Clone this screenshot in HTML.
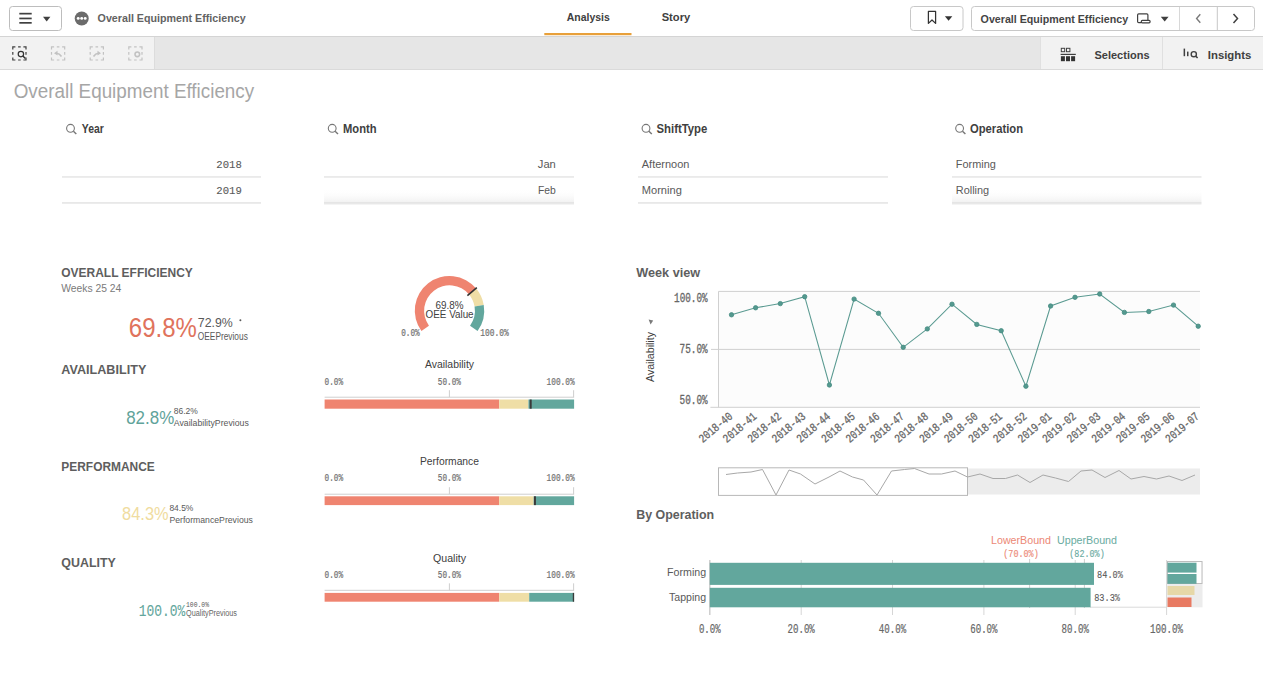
<!DOCTYPE html>
<html><head><meta charset="utf-8"><title>Overall Equipment Efficiency</title>
<style>
html,body{margin:0;padding:0;background:#fff;width:1263px;height:697px;overflow:hidden;}
svg{display:block;font-family:"Liberation Sans", sans-serif;}
</style></head><body>
<svg width="1263" height="697" viewBox="0 0 1263 697">
<defs><linearGradient id="sh" x1="0" y1="0" x2="0" y2="1"><stop offset="0" stop-color="#fff" stop-opacity="0"/><stop offset="1" stop-color="#f1f1f1"/></linearGradient></defs>
<rect x="0" y="0" width="1263" height="36" fill="#ffffff"/>
<rect x="0" y="36" width="1263" height="1" fill="#d4d4d4"/>
<rect x="9.5" y="6.5" width="52" height="24" rx="3" fill="#fff" stroke="#bdbdbd" stroke-width="1"/>
<rect x="19.3" y="12.8" width="12.4" height="1.7" fill="#404040"/>
<rect x="19.3" y="17.6" width="12.4" height="1.7" fill="#404040"/>
<rect x="19.3" y="22.0" width="12.4" height="1.7" fill="#404040"/>
<path d="M43 16.8 L50.4 16.8 L46.7 21.4 Z" fill="#404040"/>
<circle cx="81.7" cy="18.5" r="7" fill="#6b6b6b"/>
<circle cx="78.2" cy="18.4" r="1.45" fill="#fff"/>
<circle cx="81.7" cy="18.4" r="1.45" fill="#fff"/>
<circle cx="85.2" cy="18.4" r="1.45" fill="#fff"/>
<text x="97.60" y="21.60" font-size="11.3" fill="#636363" font-weight="bold" textLength="148.00" lengthAdjust="spacingAndGlyphs" >Overall Equipment Efficiency</text>
<text x="566.80" y="21.10" font-size="11.6" fill="#404040" font-weight="bold" textLength="43.00" lengthAdjust="spacingAndGlyphs" >Analysis</text>
<text x="661.70" y="21.10" font-size="11.6" fill="#404040" font-weight="bold" textLength="28.50" lengthAdjust="spacingAndGlyphs" >Story</text>
<rect x="544.3" y="33" width="87.2" height="2.2" fill="#e8a03a"/>
<rect x="910.5" y="6.5" width="52.5" height="24" rx="3" fill="#fff" stroke="#c8c8c8"/>
<path d="M928.4 11.4 h7.2 v12 l-3.6 -3.4 l-3.6 3.4 z" fill="none" stroke="#333" stroke-width="1.25" stroke-linejoin="round"/>
<path d="M944.9 16.2 L952.3 16.2 L948.6 20.8 Z" fill="#333"/>
<rect x="971.5" y="6.5" width="283" height="24" rx="3" fill="#fff" stroke="#c8c8c8"/>
<rect x="1179" y="7" width="1" height="23" fill="#d8d8d8"/>
<rect x="1216.8" y="7" width="1" height="23" fill="#c8c8c8"/>
<text x="980.60" y="22.60" font-size="11.4" fill="#454545" font-weight="bold" textLength="147.50" lengthAdjust="spacingAndGlyphs" >Overall Equipment Efficiency</text>
<path d="M1141.3 22.7 H1138.7 a1.1 1.1 0 0 1 -1.1 -1.1 V15 a1.1 1.1 0 0 1 1.1 -1.1 H1146.8 a1.1 1.1 0 0 1 1.1 1.1 V20.5" fill="none" stroke="#404040" stroke-width="1.2"/><rect x="1141.3" y="20.4" width="8.8" height="2.4" rx="1" fill="none" stroke="#404040" stroke-width="1.2"/>
<path d="M1160.8 16.8 L1168.6 16.8 L1164.7 21.4 Z" fill="#404040"/>
<path d="M1200.3 14.3 L1196.6 18.5 L1200.3 22.7" fill="none" stroke="#7a7a7a" stroke-width="1.4"/>
<path d="M1233.5 14 L1237.5 18.5 L1233.5 23" fill="none" stroke="#404040" stroke-width="1.5"/>
<rect x="0" y="37" width="1263" height="32" fill="#e6e6e6"/>
<rect x="0" y="37" width="154" height="32" fill="#f2f2f2"/>
<rect x="154" y="37" width="1" height="32" fill="#dcdcdc"/>
<rect x="1040" y="37" width="223" height="32" fill="#f2f2f2"/>
<rect x="1040" y="37" width="1" height="32" fill="#e0e0e0"/>
<rect x="1162" y="37" width="1" height="32" fill="#e0e0e0"/>
<rect x="0" y="69" width="1263" height="1" fill="#dadada"/>
<path d="M12.8 49.4 V46.8 H15.4 M23.4 46.8 H26.0 V49.4 M26.0 57.4 V60.0 H23.4 M15.4 60.0 H12.8 V57.4 M18.099999999999998 46.8 H20.7 M18.099999999999998 60.0 H20.7 M12.8 52.1 V54.699999999999996 M26.0 52.1 V54.699999999999996" fill="none" stroke="#404040" stroke-width="1.2"/>
<circle cx="20.9" cy="54.1" r="2.7" fill="none" stroke="#333" stroke-width="1.2"/><path d="M22.9 56.1 L25.4 58.6" stroke="#333" stroke-width="1.4"/>
<path d="M51.5 49.4 V46.8 H54.1 M62.1 46.8 H64.7 V49.4 M64.7 57.4 V60.0 H62.1 M54.1 60.0 H51.5 V57.4 M56.800000000000004 46.8 H59.4 M56.800000000000004 60.0 H59.4 M51.5 52.1 V54.699999999999996 M64.7 52.1 V54.699999999999996" fill="none" stroke="#c2c2c2" stroke-width="1.2"/>
<path d="M61.5 56.5 Q59.5 53.5 56.5 53.2" fill="none" stroke="#c2c2c2" stroke-width="1.6"/><path d="M54 53.2 L57.5 50.8 L57.5 55.6 Z" fill="#c2c2c2"/>
<path d="M90.2 49.4 V46.8 H92.8 M100.80000000000001 46.8 H103.4 V49.4 M103.4 57.4 V60.0 H100.80000000000001 M92.8 60.0 H90.2 V57.4 M95.5 46.8 H98.1 M95.5 60.0 H98.1 M90.2 52.1 V54.699999999999996 M103.4 52.1 V54.699999999999996" fill="none" stroke="#c2c2c2" stroke-width="1.2"/>
<path d="M93.5 56.5 Q95.5 53.5 98.5 53.2" fill="none" stroke="#c2c2c2" stroke-width="1.6"/><path d="M101 53.2 L97.5 50.8 L97.5 55.6 Z" fill="#c2c2c2"/>
<path d="M128.8 49.4 V46.8 H131.4 M139.4 46.8 H142.0 V49.4 M142.0 57.4 V60.0 H139.4 M131.4 60.0 H128.8 V57.4 M134.1 46.8 H136.70000000000002 M134.1 60.0 H136.70000000000002 M128.8 52.1 V54.699999999999996 M142.0 52.1 V54.699999999999996" fill="none" stroke="#c2c2c2" stroke-width="1.2"/>
<circle cx="137.3" cy="54.3" r="2.3" fill="none" stroke="#c2c2c2" stroke-width="1.6"/>
<rect x="1061.3" y="48.3" width="3.4" height="3.4" fill="none" stroke="#404040" stroke-width="1"/>
<rect x="1066.5" y="48.3" width="3.4" height="3.4" fill="none" stroke="#404040" stroke-width="1"/>
<rect x="1060.6" y="53.8" width="15.2" height="1.2" fill="#404040"/>
<rect x="1060.9" y="56.2" width="4" height="5" fill="#333"/>
<rect x="1066.0" y="56.2" width="4" height="5" fill="#333"/>
<rect x="1071.1" y="56.2" width="4" height="5" fill="#333"/>
<text x="1094.50" y="59.00" font-size="11.2" fill="#404040" font-weight="bold" textLength="55.00" lengthAdjust="spacingAndGlyphs" >Selections</text>
<rect x="1183.6" y="48.6" width="1.5" height="7.6" fill="#404040"/><rect x="1187" y="51.6" width="1.5" height="4.6" fill="#404040"/>
<circle cx="1193.8" cy="54.2" r="2.6" fill="none" stroke="#404040" stroke-width="1.4"/><path d="M1195.7 56.1 L1197.6 58" stroke="#404040" stroke-width="1.5"/>
<text x="1207.80" y="58.80" font-size="11.2" fill="#404040" font-weight="bold" textLength="43.50" lengthAdjust="spacingAndGlyphs" >Insights</text>
<text x="13.70" y="97.70" font-size="20.1" fill="#a6a6a6" textLength="240.50" lengthAdjust="spacingAndGlyphs" >Overall Equipment Efficiency</text>
<circle cx="70.5" cy="128.3" r="3.9" fill="none" stroke="#777" stroke-width="1.1"/><path d="M73.4 131.2 L76.3 134.1" stroke="#777" stroke-width="1.4"/>
<text x="81.80" y="133.20" font-size="12" fill="#404040" font-weight="bold" textLength="22.00" lengthAdjust="spacingAndGlyphs" >Year</text>
<rect x="62" y="176.4" width="199" height="1.1" fill="#dcdcdc"/>
<rect x="62" y="202.4" width="199" height="1.1" fill="#d9d9d9" />
<text x="241.80" y="167.60" font-size="11.6" fill="#595959" text-anchor="end" font-family='"Liberation Mono", monospace' stroke="#595959" stroke-width="0.1" textLength="25.50" lengthAdjust="spacingAndGlyphs" >2018</text>
<text x="241.80" y="193.60" font-size="11.6" fill="#595959" text-anchor="end" font-family='"Liberation Mono", monospace' stroke="#595959" stroke-width="0.1" textLength="25.50" lengthAdjust="spacingAndGlyphs" >2019</text>
<circle cx="332.2" cy="128.3" r="3.9" fill="none" stroke="#777" stroke-width="1.1"/><path d="M335.1 131.2 L338.0 134.1" stroke="#777" stroke-width="1.4"/>
<text x="343.00" y="133.20" font-size="12" fill="#404040" font-weight="bold" textLength="33.50" lengthAdjust="spacingAndGlyphs" >Month</text>
<rect x="324" y="189" width="250" height="13.5" fill="url(#sh)"/>
<rect x="324" y="203.5" width="250" height="1.2" fill="#efefef"/>
<rect x="324" y="176.4" width="250" height="1.1" fill="#dcdcdc"/>
<rect x="324" y="202.4" width="250" height="1.1" fill="#d9d9d9" />
<text x="555.80" y="167.60" font-size="11.6" fill="#595959" text-anchor="end" textLength="18.00" lengthAdjust="spacingAndGlyphs" >Jan</text>
<text x="555.80" y="193.60" font-size="11.6" fill="#595959" text-anchor="end" textLength="17.80" lengthAdjust="spacingAndGlyphs" >Feb</text>
<circle cx="646.0" cy="128.3" r="3.9" fill="none" stroke="#777" stroke-width="1.1"/><path d="M648.9 131.2 L651.8 134.1" stroke="#777" stroke-width="1.4"/>
<text x="656.50" y="133.20" font-size="12" fill="#404040" font-weight="bold" textLength="50.80" lengthAdjust="spacingAndGlyphs" >ShiftType</text>
<rect x="638" y="176.4" width="250" height="1.1" fill="#dcdcdc"/>
<rect x="638" y="202.4" width="250" height="1.1" fill="#d9d9d9" />
<text x="641.80" y="167.60" font-size="11.6" fill="#595959" textLength="47.60" lengthAdjust="spacingAndGlyphs" >Afternoon</text>
<text x="641.80" y="193.60" font-size="11.6" fill="#595959" textLength="40.00" lengthAdjust="spacingAndGlyphs" >Morning</text>
<circle cx="959.6" cy="128.3" r="3.9" fill="none" stroke="#777" stroke-width="1.1"/><path d="M962.5 131.2 L965.4 134.1" stroke="#777" stroke-width="1.4"/>
<text x="970.00" y="133.20" font-size="12" fill="#404040" font-weight="bold" textLength="53.00" lengthAdjust="spacingAndGlyphs" >Operation</text>
<rect x="952" y="189" width="249.5" height="13.5" fill="url(#sh)"/>
<rect x="952" y="203.5" width="249.5" height="1.2" fill="#efefef"/>
<rect x="952" y="176.4" width="249.5" height="1.1" fill="#dcdcdc"/>
<rect x="952" y="202.4" width="249.5" height="1.1" fill="#d9d9d9" />
<text x="955.80" y="167.60" font-size="11.6" fill="#595959" textLength="40.00" lengthAdjust="spacingAndGlyphs" >Forming</text>
<text x="955.80" y="193.60" font-size="11.6" fill="#595959" textLength="33.30" lengthAdjust="spacingAndGlyphs" >Rolling</text>
<text x="61.30" y="276.70" font-size="13.1" fill="#5e5e5e" font-weight="bold" textLength="131.50" lengthAdjust="spacingAndGlyphs" >OVERALL EFFICIENCY</text>
<text x="61.30" y="291.50" font-size="11" fill="#7a7a7a" textLength="60.00" lengthAdjust="spacingAndGlyphs" >Weeks 25 24</text>
<text x="128.80" y="337.20" font-size="27.6" fill="#e0735c" textLength="68.00" lengthAdjust="spacingAndGlyphs" >69.8%</text>
<text x="197.80" y="326.90" font-size="13.5" fill="#595959" textLength="35.00" lengthAdjust="spacingAndGlyphs" >72.9%</text>
<circle cx="240.4" cy="320.3" r="1" fill="#595959"/>
<text x="197.80" y="340.00" font-size="10" fill="#595959" textLength="50.00" lengthAdjust="spacingAndGlyphs" >OEEPrevious</text>
<text x="61.30" y="373.60" font-size="13.1" fill="#5e5e5e" font-weight="bold" textLength="85.00" lengthAdjust="spacingAndGlyphs" >AVAILABILITY</text>
<text x="126.20" y="423.70" font-size="18.7" fill="#5fa39a" textLength="48.00" lengthAdjust="spacingAndGlyphs" >82.8%</text>
<text x="173.80" y="414.40" font-size="9.3" fill="#595959" textLength="24.00" lengthAdjust="spacingAndGlyphs" >86.2%</text>
<text x="173.80" y="425.80" font-size="9.3" fill="#595959" textLength="75.00" lengthAdjust="spacingAndGlyphs" >AvailabilityPrevious</text>
<text x="61.30" y="470.50" font-size="13.1" fill="#5e5e5e" font-weight="bold" textLength="93.50" lengthAdjust="spacingAndGlyphs" >PERFORMANCE</text>
<text x="122.10" y="520.30" font-size="18.7" fill="#f0dca0" textLength="46.50" lengthAdjust="spacingAndGlyphs" >84.3%</text>
<text x="169.40" y="511.10" font-size="9.3" fill="#595959" textLength="24.00" lengthAdjust="spacingAndGlyphs" >84.5%</text>
<text x="169.40" y="522.60" font-size="9.3" fill="#595959" textLength="83.50" lengthAdjust="spacingAndGlyphs" >PerformancePrevious</text>
<text x="61.30" y="566.60" font-size="13.1" fill="#5e5e5e" font-weight="bold" textLength="54.50" lengthAdjust="spacingAndGlyphs" >QUALITY</text>
<text x="138.80" y="615.60" font-size="17" fill="#62a69c" font-family='"Liberation Mono", monospace' stroke="#62a69c" stroke-width="0.1" textLength="46.50" lengthAdjust="spacingAndGlyphs" >100.0%</text>
<text x="186.00" y="607.20" font-size="7.5" fill="#595959" font-family='"Liberation Mono", monospace' stroke="#595959" stroke-width="0" textLength="23.00" lengthAdjust="spacingAndGlyphs" >100.0%</text>
<text x="186.00" y="616.40" font-size="8.5" fill="#666666" textLength="51.00" lengthAdjust="spacingAndGlyphs" >QualityPrevious</text>
<path d="M421.43 331.10 A34.7 34.7 0 0 1 476.24 288.58 L469.07 294.51 A25.4 25.4 0 0 0 428.95 325.63 Z" fill="#ef8470"/>
<path d="M476.24 288.58 A34.7 34.7 0 0 1 483.74 305.06 L474.56 306.57 A25.4 25.4 0 0 0 469.07 294.51 Z" fill="#efdea6"/>
<path d="M483.74 305.06 A34.7 34.7 0 0 1 477.57 331.10 L470.05 325.63 A25.4 25.4 0 0 0 474.56 306.57 Z" fill="#62a79d"/>
<path d="M467.40 295.63 L476.81 287.70" stroke="#333" stroke-width="1.6"/>
<text x="449.60" y="308.70" font-size="11" fill="#404040" text-anchor="middle" textLength="28.00" lengthAdjust="spacingAndGlyphs" >69.8%</text>
<text x="449.60" y="317.60" font-size="11" fill="#404040" text-anchor="middle" textLength="48.00" lengthAdjust="spacingAndGlyphs" >OEE Value</text>
<text x="401.20" y="336.40" font-size="10.5" fill="#6e6e6e" font-family='"Liberation Mono", monospace' stroke="#6e6e6e" stroke-width="0.2" textLength="18.50" lengthAdjust="spacingAndGlyphs" >0.0%</text>
<text x="480.30" y="336.40" font-size="10.5" fill="#6e6e6e" font-family='"Liberation Mono", monospace' stroke="#6e6e6e" stroke-width="0.2" textLength="28.50" lengthAdjust="spacingAndGlyphs" >100.0%</text>
<text x="449.50" y="367.90" font-size="11" fill="#404040" text-anchor="middle" textLength="49.00" lengthAdjust="spacingAndGlyphs" >Availability</text>
<text x="324.60" y="384.60" font-size="10.5" fill="#6e6e6e" font-family='"Liberation Mono", monospace' stroke="#6e6e6e" stroke-width="0.2" textLength="18.50" lengthAdjust="spacingAndGlyphs" >0.0%</text>
<text x="449.35" y="384.60" font-size="10.5" fill="#6e6e6e" text-anchor="middle" font-family='"Liberation Mono", monospace' stroke="#6e6e6e" stroke-width="0.2" textLength="23.00" lengthAdjust="spacingAndGlyphs" >50.0%</text>
<text x="574.60" y="384.60" font-size="10.5" fill="#6e6e6e" text-anchor="end" font-family='"Liberation Mono", monospace' stroke="#6e6e6e" stroke-width="0.2" textLength="28.00" lengthAdjust="spacingAndGlyphs" >100.0%</text>
<rect x="324.6" y="396.7" width="249.5" height="1" fill="#cfcfcf"/>
<rect x="448.9" y="390.2" width="1" height="7" fill="#cfcfcf"/>
<rect x="573.1" y="390.2" width="1" height="7" fill="#cfcfcf"/>
<rect x="324.6" y="399.5" width="174.65" height="9.20" fill="#ef8470"/>
<rect x="499.25" y="399.5" width="29.19" height="9.20" fill="#efdea6"/>
<rect x="528.44" y="399.5" width="45.66" height="9.20" fill="#62a79d"/>
<rect x="529.69" y="399.5" width="2" height="9.20" fill="#3a3a3a"/>
<text x="449.50" y="465.00" font-size="11" fill="#404040" text-anchor="middle" textLength="59.00" lengthAdjust="spacingAndGlyphs" >Performance</text>
<text x="324.60" y="481.30" font-size="10.5" fill="#6e6e6e" font-family='"Liberation Mono", monospace' stroke="#6e6e6e" stroke-width="0.2" textLength="18.50" lengthAdjust="spacingAndGlyphs" >0.0%</text>
<text x="449.35" y="481.30" font-size="10.5" fill="#6e6e6e" text-anchor="middle" font-family='"Liberation Mono", monospace' stroke="#6e6e6e" stroke-width="0.2" textLength="23.00" lengthAdjust="spacingAndGlyphs" >50.0%</text>
<text x="574.60" y="481.30" font-size="10.5" fill="#6e6e6e" text-anchor="end" font-family='"Liberation Mono", monospace' stroke="#6e6e6e" stroke-width="0.2" textLength="28.00" lengthAdjust="spacingAndGlyphs" >100.0%</text>
<rect x="324.6" y="493.7" width="249.5" height="1" fill="#cfcfcf"/>
<rect x="448.9" y="487.2" width="1" height="7" fill="#cfcfcf"/>
<rect x="573.1" y="487.2" width="1" height="7" fill="#cfcfcf"/>
<rect x="324.6" y="496.3" width="174.65" height="8.80" fill="#ef8470"/>
<rect x="499.25" y="496.3" width="34.43" height="8.80" fill="#efdea6"/>
<rect x="533.68" y="496.3" width="40.42" height="8.80" fill="#62a79d"/>
<rect x="533.93" y="496.3" width="2" height="8.80" fill="#3a3a3a"/>
<text x="449.50" y="561.90" font-size="11" fill="#404040" text-anchor="middle" textLength="33.00" lengthAdjust="spacingAndGlyphs" >Quality</text>
<text x="324.60" y="577.70" font-size="10.5" fill="#6e6e6e" font-family='"Liberation Mono", monospace' stroke="#6e6e6e" stroke-width="0.2" textLength="18.50" lengthAdjust="spacingAndGlyphs" >0.0%</text>
<text x="449.35" y="577.70" font-size="10.5" fill="#6e6e6e" text-anchor="middle" font-family='"Liberation Mono", monospace' stroke="#6e6e6e" stroke-width="0.2" textLength="23.00" lengthAdjust="spacingAndGlyphs" >50.0%</text>
<text x="574.60" y="577.70" font-size="10.5" fill="#6e6e6e" text-anchor="end" font-family='"Liberation Mono", monospace' stroke="#6e6e6e" stroke-width="0.2" textLength="28.00" lengthAdjust="spacingAndGlyphs" >100.0%</text>
<rect x="324.6" y="589.8" width="249.5" height="1" fill="#cfcfcf"/>
<rect x="448.9" y="583.3" width="1" height="7" fill="#cfcfcf"/>
<rect x="573.1" y="583.3" width="1" height="7" fill="#cfcfcf"/>
<rect x="324.6" y="592.9" width="174.65" height="8.80" fill="#ef8470"/>
<rect x="499.25" y="592.9" width="29.94" height="8.80" fill="#efdea6"/>
<rect x="529.19" y="592.9" width="44.91" height="8.80" fill="#62a79d"/>
<rect x="572.80" y="592.9" width="1.3" height="8.80" fill="#3a3a3a"/>
<text x="636.20" y="276.80" font-size="13.1" fill="#5e5e5e" font-weight="bold" textLength="64.00" lengthAdjust="spacingAndGlyphs" >Week view</text>
<rect x="718.5" y="291.4" width="481.5" height="115.90000000000003" fill="#fcfcfc"/>
<rect x="718.5" y="290.9" width="481.5" height="1" fill="#d0d0d0"/>
<rect x="718.5" y="348.9" width="481.5" height="1" fill="#d0d0d0"/>
<rect x="710.4" y="406.8" width="489.6" height="1" fill="#d0d0d0"/>
<rect x="718.0" y="291.4" width="1" height="115.90000000000003" fill="#d0d0d0"/>
<text x="707.60" y="301.80" font-size="12.4" fill="#666666" text-anchor="end" font-family='"Liberation Mono", monospace' stroke="#666666" stroke-width="0.3" textLength="33.50" lengthAdjust="spacingAndGlyphs" >100.0%</text>
<text x="707.60" y="353.20" font-size="12.4" fill="#666666" text-anchor="end" font-family='"Liberation Mono", monospace' stroke="#666666" stroke-width="0.3" textLength="28.00" lengthAdjust="spacingAndGlyphs" >75.0%</text>
<text x="707.60" y="404.20" font-size="12.4" fill="#666666" text-anchor="end" font-family='"Liberation Mono", monospace' stroke="#666666" stroke-width="0.3" textLength="28.00" lengthAdjust="spacingAndGlyphs" >50.0%</text>
<path d="M648.6 319.6 L653.2 320.4 L650.6 324.4 Z" fill="#7a7a7a"/>
<rect x="711" y="348.9" width="8" height="1" fill="#d0d0d0"/>
<text x="0" y="0" font-size="11" fill="#404040" text-anchor="middle" textLength="50" lengthAdjust="spacingAndGlyphs" transform="translate(653.8 357) rotate(-90)">Availability</text>
<polyline points="731.5,314.8 755.6,307.8 780.3,303.6 804.7,296.7 829.4,385.0 854.1,299.1 878.5,313.3 903.2,347.3 927.3,328.9 952.0,304.2 976.8,324.4 1001.2,330.7 1025.9,386.2 1050.6,306.0 1075.0,297.3 1099.7,294.0 1124.4,312.4 1148.8,311.5 1173.5,305.1 1198.2,326.2" fill="none" stroke="#5a9a91" stroke-width="1.05"/>
<circle cx="731.5" cy="314.8" r="2.2" fill="#54998f" stroke="#458c82" stroke-width="0.8"/>
<circle cx="755.6" cy="307.8" r="2.2" fill="#54998f" stroke="#458c82" stroke-width="0.8"/>
<circle cx="780.3" cy="303.6" r="2.2" fill="#54998f" stroke="#458c82" stroke-width="0.8"/>
<circle cx="804.7" cy="296.7" r="2.2" fill="#54998f" stroke="#458c82" stroke-width="0.8"/>
<circle cx="829.4" cy="385.0" r="2.2" fill="#54998f" stroke="#458c82" stroke-width="0.8"/>
<circle cx="854.1" cy="299.1" r="2.2" fill="#54998f" stroke="#458c82" stroke-width="0.8"/>
<circle cx="878.5" cy="313.3" r="2.2" fill="#54998f" stroke="#458c82" stroke-width="0.8"/>
<circle cx="903.2" cy="347.3" r="2.2" fill="#54998f" stroke="#458c82" stroke-width="0.8"/>
<circle cx="927.3" cy="328.9" r="2.2" fill="#54998f" stroke="#458c82" stroke-width="0.8"/>
<circle cx="952.0" cy="304.2" r="2.2" fill="#54998f" stroke="#458c82" stroke-width="0.8"/>
<circle cx="976.8" cy="324.4" r="2.2" fill="#54998f" stroke="#458c82" stroke-width="0.8"/>
<circle cx="1001.2" cy="330.7" r="2.2" fill="#54998f" stroke="#458c82" stroke-width="0.8"/>
<circle cx="1025.9" cy="386.2" r="2.2" fill="#54998f" stroke="#458c82" stroke-width="0.8"/>
<circle cx="1050.6" cy="306.0" r="2.2" fill="#54998f" stroke="#458c82" stroke-width="0.8"/>
<circle cx="1075.0" cy="297.3" r="2.2" fill="#54998f" stroke="#458c82" stroke-width="0.8"/>
<circle cx="1099.7" cy="294.0" r="2.2" fill="#54998f" stroke="#458c82" stroke-width="0.8"/>
<circle cx="1124.4" cy="312.4" r="2.2" fill="#54998f" stroke="#458c82" stroke-width="0.8"/>
<circle cx="1148.8" cy="311.5" r="2.2" fill="#54998f" stroke="#458c82" stroke-width="0.8"/>
<circle cx="1173.5" cy="305.1" r="2.2" fill="#54998f" stroke="#458c82" stroke-width="0.8"/>
<circle cx="1198.2" cy="326.2" r="2.2" fill="#54998f" stroke="#458c82" stroke-width="0.8"/>
<text x="0" y="0" font-size="12" fill="#666666" stroke="#666666" stroke-width="0.3" text-anchor="end" font-family='"Liberation Mono", monospace' textLength="40" lengthAdjust="spacingAndGlyphs" transform="translate(733.3 417.5) rotate(-40)">2018-40</text>
<text x="0" y="0" font-size="12" fill="#666666" stroke="#666666" stroke-width="0.3" text-anchor="end" font-family='"Liberation Mono", monospace' textLength="40" lengthAdjust="spacingAndGlyphs" transform="translate(757.4 417.5) rotate(-40)">2018-41</text>
<text x="0" y="0" font-size="12" fill="#666666" stroke="#666666" stroke-width="0.3" text-anchor="end" font-family='"Liberation Mono", monospace' textLength="40" lengthAdjust="spacingAndGlyphs" transform="translate(782.1 417.5) rotate(-40)">2018-42</text>
<text x="0" y="0" font-size="12" fill="#666666" stroke="#666666" stroke-width="0.3" text-anchor="end" font-family='"Liberation Mono", monospace' textLength="40" lengthAdjust="spacingAndGlyphs" transform="translate(806.5 417.5) rotate(-40)">2018-43</text>
<text x="0" y="0" font-size="12" fill="#666666" stroke="#666666" stroke-width="0.3" text-anchor="end" font-family='"Liberation Mono", monospace' textLength="40" lengthAdjust="spacingAndGlyphs" transform="translate(831.2 417.5) rotate(-40)">2018-44</text>
<text x="0" y="0" font-size="12" fill="#666666" stroke="#666666" stroke-width="0.3" text-anchor="end" font-family='"Liberation Mono", monospace' textLength="40" lengthAdjust="spacingAndGlyphs" transform="translate(855.9 417.5) rotate(-40)">2018-45</text>
<text x="0" y="0" font-size="12" fill="#666666" stroke="#666666" stroke-width="0.3" text-anchor="end" font-family='"Liberation Mono", monospace' textLength="40" lengthAdjust="spacingAndGlyphs" transform="translate(880.3 417.5) rotate(-40)">2018-46</text>
<text x="0" y="0" font-size="12" fill="#666666" stroke="#666666" stroke-width="0.3" text-anchor="end" font-family='"Liberation Mono", monospace' textLength="40" lengthAdjust="spacingAndGlyphs" transform="translate(905.0 417.5) rotate(-40)">2018-47</text>
<text x="0" y="0" font-size="12" fill="#666666" stroke="#666666" stroke-width="0.3" text-anchor="end" font-family='"Liberation Mono", monospace' textLength="40" lengthAdjust="spacingAndGlyphs" transform="translate(929.1 417.5) rotate(-40)">2018-48</text>
<text x="0" y="0" font-size="12" fill="#666666" stroke="#666666" stroke-width="0.3" text-anchor="end" font-family='"Liberation Mono", monospace' textLength="40" lengthAdjust="spacingAndGlyphs" transform="translate(953.8 417.5) rotate(-40)">2018-49</text>
<text x="0" y="0" font-size="12" fill="#666666" stroke="#666666" stroke-width="0.3" text-anchor="end" font-family='"Liberation Mono", monospace' textLength="40" lengthAdjust="spacingAndGlyphs" transform="translate(978.6 417.5) rotate(-40)">2018-50</text>
<text x="0" y="0" font-size="12" fill="#666666" stroke="#666666" stroke-width="0.3" text-anchor="end" font-family='"Liberation Mono", monospace' textLength="40" lengthAdjust="spacingAndGlyphs" transform="translate(1003.0 417.5) rotate(-40)">2018-51</text>
<text x="0" y="0" font-size="12" fill="#666666" stroke="#666666" stroke-width="0.3" text-anchor="end" font-family='"Liberation Mono", monospace' textLength="40" lengthAdjust="spacingAndGlyphs" transform="translate(1027.7 417.5) rotate(-40)">2018-52</text>
<text x="0" y="0" font-size="12" fill="#666666" stroke="#666666" stroke-width="0.3" text-anchor="end" font-family='"Liberation Mono", monospace' textLength="40" lengthAdjust="spacingAndGlyphs" transform="translate(1052.4 417.5) rotate(-40)">2019-01</text>
<text x="0" y="0" font-size="12" fill="#666666" stroke="#666666" stroke-width="0.3" text-anchor="end" font-family='"Liberation Mono", monospace' textLength="40" lengthAdjust="spacingAndGlyphs" transform="translate(1076.8 417.5) rotate(-40)">2019-02</text>
<text x="0" y="0" font-size="12" fill="#666666" stroke="#666666" stroke-width="0.3" text-anchor="end" font-family='"Liberation Mono", monospace' textLength="40" lengthAdjust="spacingAndGlyphs" transform="translate(1101.5 417.5) rotate(-40)">2019-03</text>
<text x="0" y="0" font-size="12" fill="#666666" stroke="#666666" stroke-width="0.3" text-anchor="end" font-family='"Liberation Mono", monospace' textLength="40" lengthAdjust="spacingAndGlyphs" transform="translate(1126.2 417.5) rotate(-40)">2019-04</text>
<text x="0" y="0" font-size="12" fill="#666666" stroke="#666666" stroke-width="0.3" text-anchor="end" font-family='"Liberation Mono", monospace' textLength="40" lengthAdjust="spacingAndGlyphs" transform="translate(1150.6 417.5) rotate(-40)">2019-05</text>
<text x="0" y="0" font-size="12" fill="#666666" stroke="#666666" stroke-width="0.3" text-anchor="end" font-family='"Liberation Mono", monospace' textLength="40" lengthAdjust="spacingAndGlyphs" transform="translate(1175.3 417.5) rotate(-40)">2019-06</text>
<text x="0" y="0" font-size="12" fill="#666666" stroke="#666666" stroke-width="0.3" text-anchor="end" font-family='"Liberation Mono", monospace' textLength="40" lengthAdjust="spacingAndGlyphs" transform="translate(1200.0 417.5) rotate(-40)">2019-07</text>
<rect x="967.5" y="468.5" width="232.5" height="26" fill="#ececec"/>
<rect x="718.5" y="467.8" width="249" height="27.6" fill="none" stroke="#b8b8b8" stroke-width="1"/>
<polyline points="726.0,474.5 737.5,473.0 751.0,472.0 762.5,469.5 776.0,495.0 789.0,470.0 800.5,474.0 815.0,484.0 829.0,477.0 840.0,471.0 852.5,477.0 863.5,480.0 877.0,495.0 891.5,471.0 904.5,469.5 914.5,468.5 929.0,474.0 941.5,474.0 955.0,471.0 967.5,477.0 980.0,474.0 993.0,478.5 1005.5,478.5 1017.5,475.0 1030.0,482.5 1043.0,475.0 1055.5,478.0 1068.5,481.5 1081.0,471.0 1092.0,470.0 1105.0,477.5 1119.0,470.5 1131.0,479.0 1144.0,476.5 1156.5,479.0 1169.0,476.0 1182.0,480.5 1195.0,475.0" fill="none" stroke="#a8a8a8" stroke-width="1"/>
<text x="636.20" y="518.60" font-size="13.1" fill="#5e5e5e" font-weight="bold" textLength="78.00" lengthAdjust="spacingAndGlyphs" >By Operation</text>
<rect x="709.3" y="560" width="1" height="55" fill="#d6d6d6"/>
<text x="709.80" y="632.80" font-size="12" fill="#666666" text-anchor="middle" font-family='"Liberation Mono", monospace' stroke="#666666" stroke-width="0.2" textLength="21.80" lengthAdjust="spacingAndGlyphs" >0.0%</text>
<rect x="800.7" y="560" width="1" height="55" fill="#d6d6d6"/>
<text x="801.16" y="632.80" font-size="12" fill="#666666" text-anchor="middle" font-family='"Liberation Mono", monospace' stroke="#666666" stroke-width="0.2" textLength="27.30" lengthAdjust="spacingAndGlyphs" >20.0%</text>
<rect x="892.0" y="560" width="1" height="55" fill="#d6d6d6"/>
<text x="892.52" y="632.80" font-size="12" fill="#666666" text-anchor="middle" font-family='"Liberation Mono", monospace' stroke="#666666" stroke-width="0.2" textLength="27.30" lengthAdjust="spacingAndGlyphs" >40.0%</text>
<rect x="983.4" y="560" width="1" height="55" fill="#d6d6d6"/>
<text x="983.88" y="632.80" font-size="12" fill="#666666" text-anchor="middle" font-family='"Liberation Mono", monospace' stroke="#666666" stroke-width="0.2" textLength="27.30" lengthAdjust="spacingAndGlyphs" >60.0%</text>
<rect x="1074.7" y="560" width="1" height="55" fill="#d6d6d6"/>
<text x="1075.24" y="632.80" font-size="12" fill="#666666" text-anchor="middle" font-family='"Liberation Mono", monospace' stroke="#666666" stroke-width="0.2" textLength="27.30" lengthAdjust="spacingAndGlyphs" >80.0%</text>
<rect x="1166.1" y="560" width="1" height="55" fill="#d6d6d6"/>
<text x="1166.60" y="632.80" font-size="12" fill="#666666" text-anchor="middle" font-family='"Liberation Mono", monospace' stroke="#666666" stroke-width="0.2" textLength="33.00" lengthAdjust="spacingAndGlyphs" >100.0%</text>
<rect x="709.3" y="560" width="1" height="55" fill="#c8c8c8"/>
<rect x="1090" y="606.7" width="76.6" height="1" fill="#dadada"/>
<rect x="1029.1" y="559" width="1" height="49" fill="#cfcfcf"/>
<rect x="1083.9" y="559" width="1" height="49" fill="#cfcfcf"/>
<rect x="709.8" y="562.8" width="384.2" height="22.1" fill="#62a79d"/>
<rect x="709.8" y="587.8" width="380.8" height="19.5" fill="#62a79d"/>
<text x="706.10" y="576.30" font-size="11.6" fill="#595959" text-anchor="end" textLength="39.00" lengthAdjust="spacingAndGlyphs" >Forming</text>
<text x="706.10" y="600.70" font-size="11.6" fill="#595959" text-anchor="end" textLength="37.00" lengthAdjust="spacingAndGlyphs" >Tapping</text>
<text x="1097.10" y="577.70" font-size="10.5" fill="#595959" font-family='"Liberation Mono", monospace' stroke="#595959" stroke-width="0.1" textLength="25.80" lengthAdjust="spacingAndGlyphs" >84.0%</text>
<text x="1094.20" y="601.20" font-size="10.5" fill="#595959" font-family='"Liberation Mono", monospace' stroke="#595959" stroke-width="0.1" textLength="25.80" lengthAdjust="spacingAndGlyphs" >83.3%</text>
<text x="1021.00" y="544.10" font-size="11.2" fill="#ec8875" text-anchor="middle" textLength="60.00" lengthAdjust="spacingAndGlyphs" >LowerBound</text>
<text x="1021.00" y="557.00" font-size="10" fill="#ec8875" text-anchor="middle" font-family='"Liberation Mono", monospace' stroke="#ec8875" stroke-width="0.15" textLength="35.50" lengthAdjust="spacingAndGlyphs" >(70.0%)</text>
<text x="1087.00" y="544.10" font-size="11.2" fill="#6aaba1" text-anchor="middle" textLength="60.00" lengthAdjust="spacingAndGlyphs" >UpperBound</text>
<text x="1087.00" y="557.00" font-size="10" fill="#6aaba1" text-anchor="middle" font-family='"Liberation Mono", monospace' stroke="#6aaba1" stroke-width="0.15" textLength="35.50" lengthAdjust="spacingAndGlyphs" >(82.0%)</text>
<rect x="1167.2" y="561.3" width="35.3" height="46" fill="#ececec"/>
<rect x="1167.5" y="561.5" width="34.5" height="22" fill="#fff" stroke="#bdbdbd" stroke-width="1"/>
<rect x="1167.5" y="562.7" width="29" height="9.9" fill="#62a79d"/>
<rect x="1167.5" y="574" width="29" height="9.8" fill="#62a79d"/>
<rect x="1167.5" y="586" width="27" height="9" fill="#e6d8a8"/>
<rect x="1167.5" y="597.5" width="24" height="9.5" fill="#e87a62"/>
</svg>
</body></html>
